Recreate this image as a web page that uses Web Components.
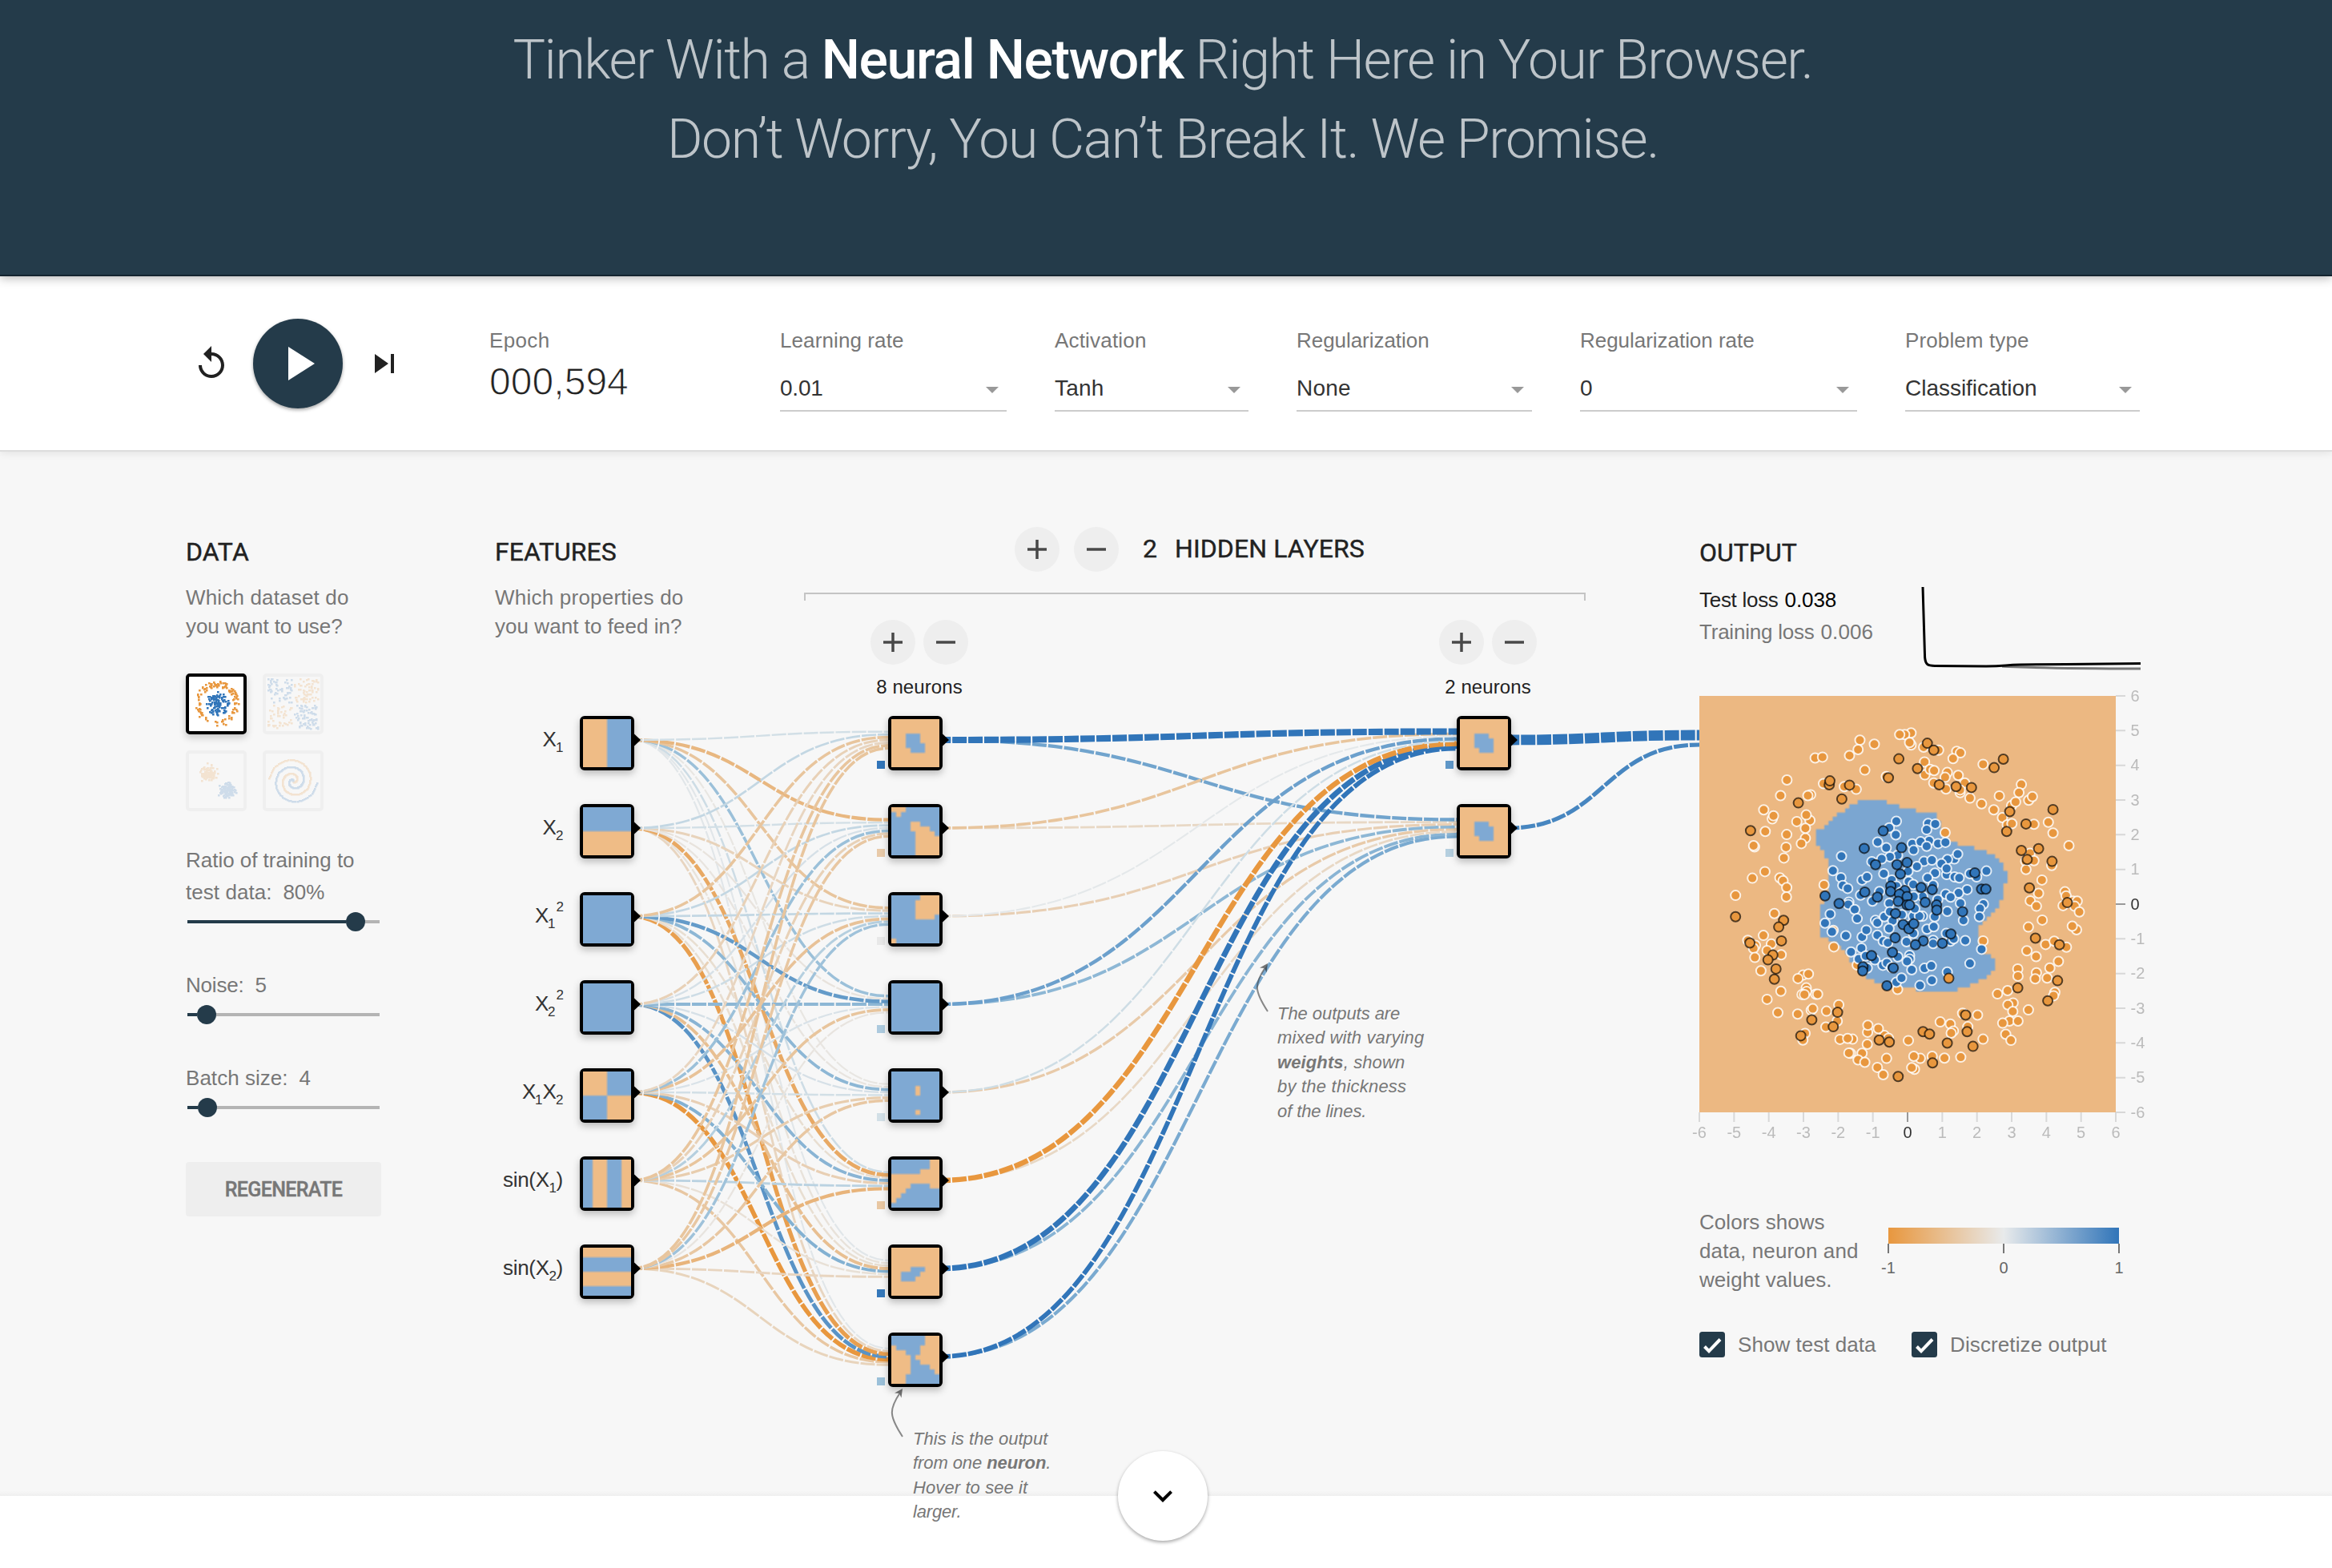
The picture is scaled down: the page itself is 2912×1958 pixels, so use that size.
<!DOCTYPE html>
<html lang="en">
<head>
<meta charset="utf-8">
<title>A Neural Network Playground</title>
<style>
html,body{margin:0;background:#fff}
body{font-family:"Liberation Sans",Arial,sans-serif;color:#777;width:2912px;height:1958px;overflow:hidden}
</style>
</head>
<body>
<nn-app></nn-app>
<script>
const ORANGE=[232,151,62],MID=[232,234,235],BLUE=[49,117,185];
function weightColor(w){
  const t=Math.min(1,Math.abs(w)),e=w<0?ORANGE:BLUE,lift=w<0?[0,0,0]:[0,7,3];
  return 'rgb('+MID.map((m,i)=>Math.round(m+(e[i]-m)*t+lift[i]*Math.sin(Math.PI*t))).join(',')+')';
}
function define(name,html,init){
  customElements.define(name,class extends HTMLElement{
    constructor(){super();this.attachShadow({mode:'open'}).innerHTML=html}
    connectedCallback(){if(init)init.call(this,this.shadowRoot)}
  });
}

/* Single line of text tracked to an exact width. */
define('fit-text','<style>:host{display:block;white-space:pre}</style><span><slot></slot></span>',function(r){
  const w=+this.getAttribute('w');
  if(!w)return;
  const s=r.querySelector('span'),cur=s.getBoundingClientRect().width;
  const fs=parseFloat(getComputedStyle(this).fontSize);
  this.style.letterSpacing=((w+fs*.06-cur)/this.textContent.length).toFixed(3)+'px';
});

define('site-header',`<style>
:host{display:block;box-sizing:border-box;height:345px;padding:26px 8px 0 0;background:#243b4a;border-bottom:2px solid #14242f;
position:relative;z-index:2;box-shadow:0 2px 12px rgba(0,0,0,.3);font:300 68px/99px Roboto,sans-serif;color:#bdc4c9}
div{display:flex;justify-content:center}b{font-weight:500;color:#fff}
</style><div><fit-text w="1619">Tinker With a <b>Neural Network</b> Right Here in Your Browser.</fit-text></div>
<div><fit-text w="1234">Don’t Worry, You Can’t Break It. We Promise.</fit-text></div>`);

define('select-field',`<style>
:host{display:block;font-size:26px;line-height:30px;color:#777}
.v{display:flex;align-items:flex-start;justify-content:space-between;margin-top:28px;height:44px;border-bottom:2px solid #ccc;font-size:28px;line-height:34px;color:#333}
svg{display:block;margin:15px 10px 0 0}
</style><slot name="label"></slot><div class="v"><slot name="value"></slot><svg width="16" height="8"><path d="M0 0h16l-8 8z" fill="#999"/></svg></div>`);

define('control-bar',`<style>
:host{display:flex;box-sizing:border-box;height:217px;padding-left:240px;background:#fff;position:relative;z-index:1;box-shadow:0 2px 0 #ddd,0 2px 12px rgba(0,0,0,.12)}
svg{display:block;fill:#212121}
.play{width:112px;height:112px;margin:53px 28px 0;border-radius:50%;background:#243b4a;box-shadow:0 2px 4px rgba(0,0,0,.35);display:flex;align-items:center;justify-content:center}
.play svg{fill:#fff}
.side{margin-top:85px}
.epoch{margin:65px 0 0 107px;width:363px;font-size:26px;line-height:30px}
.n{font-size:48px;line-height:56px;margin-top:9px;color:#222;-webkit-text-stroke:1px #fff}
select-field{margin-top:65px;margin-right:60px}
</style>
<div class="side"><svg width="48" height="48" viewBox="0 0 24 24"><path d="M12 5V1L7 6l5 5V7c3.31 0 6 2.69 6 6s-2.69 6-6 6-6-2.69-6-6H4c0 4.42 3.58 8 8 8s8-3.58 8-8-3.58-8-8-8z"/></svg></div>
<div class="play"><svg width="72" height="72" viewBox="0 0 24 24"><path d="M8 5v14l11-7z"/></svg></div>
<div class="side"><svg width="48" height="48" viewBox="0 0 24 24"><path d="M6 18l8.5-6L6 6v12zM16 6v12h2V6h-2z"/></svg></div>
<div class="epoch"><fit-text w="74">Epoch</fit-text><div class="n"><fit-text w="171">000,594</fit-text></div></div>
<select-field style="width:283px"><fit-text slot="label" w="153">Learning rate</fit-text><fit-text slot="value" w="52">0.01</fit-text></select-field>
<select-field style="width:242px"><fit-text slot="label" w="113">Activation</fit-text><fit-text slot="value" w="60">Tanh</fit-text></select-field>
<select-field style="width:294px"><fit-text slot="label" w="164">Regularization</fit-text><fit-text slot="value" w="66">None</fit-text></select-field>
<select-field style="width:346px"><fit-text slot="label" w="216">Regularization rate</fit-text><fit-text slot="value">0</fit-text></select-field>
<select-field style="width:293px;margin-right:0"><fit-text slot="label" w="153">Problem type</fit-text><fit-text slot="value" w="163">Classification</fit-text></select-field>`);

define('data-thumb',`<style>:host{display:block;box-sizing:border-box;width:76px;height:76px;border:4px solid #d3d3d3;border-radius:5px;opacity:.2}
:host([active]){border-color:#000;opacity:1;background:#fff;box-shadow:0 4px 10px rgba(0,0,0,.2)}
svg{display:block}</style><svg width="68" height="68"></svg>`,function(r){
  let seed=7;const rnd=()=>(seed=(seed*16807)%2147483647)/2147483647,g=()=>rnd()+rnd()+rnd()+rnd()-2;
  const B=[],O=[],k=this.getAttribute('kind');
  if(k==='circle'){for(let i=0;i<120;i++){const a=rnd()*6.283,q=21+rnd()*7;O.push([35+q*Math.cos(a),34+q*Math.sin(a)]);
    const b=rnd()*6.283,p=rnd()*15;B.push([35+p*Math.cos(b),34+p*Math.sin(b)])}}
  if(k==='xor')for(let i=0;i<250;i++){let x=rnd()*60-30,y=rnd()*60-30;x+=x>0?1.5:-1.5;y+=y>0?1.5:-1.5;(x*y>0?B:O).push([34+x,34+y])}
  if(k==='gauss')for(let i=0;i<130;i++){O.push([24+g()*7,24+g()*7]);B.push([48+g()*7,46+g()*7])}
  if(k==='spiral')for(let i=0;i<130;i++){const q=i/130*30,t=1.75*i/130*6.283;B.push([34+q*Math.sin(t+3.14),34+q*Math.cos(t+3.14)]);O.push([34+q*Math.sin(t),34+q*Math.cos(t)])}
  const d=a=>a.map(p=>'M'+Math.round(p[0]-1)+' '+Math.round(p[1]-1)+'h2.6v2.6h-2.6z').join('');
  r.querySelector('svg').innerHTML='<path fill="#e8973e" d="'+d(O)+'"/><path fill="#3175b9" d="'+d(B)+'"/>';
});

define('range-slider',`<style>:host{display:flex;align-items:center;height:24px;width:240px;margin:5px 0 0 2px}
i{display:block;height:4px;background:#b4b4b4}i.a{background:#243b4a}b{display:block;width:24px;height:24px;border-radius:50%;background:#243b4a}</style>
<i class="a"></i><b></b><i style="flex:1"></i>`,function(r){r.querySelector('.a').style.width=this.getAttribute('at')-12+'px'});

define('data-column',`<style>
:host{display:block;width:244px;padding-top:105px;font-size:26px}
.h{font:400 32px/40px Roboto,sans-serif;color:#222;-webkit-text-stroke:.4px #222}
.d{line-height:36px;margin-top:19px}
.g{display:grid;grid-template-columns:76px 76px;gap:20px;margin:41px 0 41px}
.r{display:flex;line-height:40px}.r fit-text+fit-text{margin-left:14px}
.btn{display:flex;justify-content:center;margin-top:56px;height:68px;border-radius:4px;background:#eee;font:500 25px/70px Roboto,sans-serif;color:#777;-webkit-text-stroke:.4px #777}
</style>
<div class="h"><fit-text w="77">DATA</fit-text></div>
<div class="d"><fit-text w="202">Which dataset do</fit-text><fit-text w="194">you want to use?</fit-text></div>
<div class="g"><data-thumb kind="circle" active></data-thumb><data-thumb kind="xor"></data-thumb><data-thumb kind="gauss"></data-thumb><data-thumb kind="spiral"></data-thumb></div>
<div class="r"><fit-text w="209">Ratio of training to</fit-text></div>
<div class="r"><fit-text w="106">test data:</fit-text><fit-text w="50">80%</fit-text></div><range-slider at="210"></range-slider>
<div class="r" style="margin-top:47px"><fit-text w="71">Noise:</fit-text><fit-text>5</fit-text></div><range-slider at="24"></range-slider>
<div class="r" style="margin-top:47px"><fit-text w="126">Batch size:</fit-text><fit-text>4</fit-text></div><range-slider at="25"></range-slider>
<div class="btn"><fit-text w="145">REGENERATE</fit-text></div>`);

define('round-button',`<style>:host{display:flex;width:56px;height:56px;border-radius:50%;background:#eee;align-items:center;justify-content:center}
.m{display:none}:host([minus]) .p{display:none}svg{display:block}</style>
<svg width="24" height="24" stroke="#484848" stroke-width="3.5"><path d="M0 12h24"/><path class="p" d="M12 0v24"/></svg>`);

/* Neuron: 10x10 decision map, rows given as inclusive ranges of blue cells. */
define('nn-node',`<style>:host{position:absolute;box-sizing:border-box;width:68px;height:68px;border:4px solid #000;border-radius:6px;box-shadow:0 4px 10px rgba(0,0,0,.25);background:#000}
canvas{display:block;width:60px;height:60px}</style><canvas width="20" height="20"></canvas>`,function(r){
  const c=r.querySelector('canvas').getContext('2d');
  c.fillStyle='#efbc86';c.fillRect(0,0,20,20);c.fillStyle='#7fa9d3';
  this.getAttribute('map').split(',').forEach((row,y)=>{row.split(' ').forEach(seg=>{
    if(seg.length<2)return;const a=+seg[0],b=+seg[1];c.fillRect(a*2,y*2,(b-a+1)*2,2)})});
});

const full=Array(10).fill('09').join(',');
const INPUT_MAPS=[Array(10).fill('59').join(','),'09,09,09,09,09,,,,,',full,full,'59,59,59,59,59,04,04,04,04,04',
  Array(10).fill('01 57').join(','),',,09,09,09,,,,09,09'];
const HIDDEN_MAPS=[',,,35,35,36,46,,,','39,00 29,09,03 69,03 89,04 99,04,04,04,04','05,04,04,04,04 99,09,09,09,09,19',full,
  '09,09,09,04 69,04 69,09,09,09,04 69,09','07,07,05,,,47,39,29,19,09',',,,,46,25,24,,,','06,06,15,35,44,45,47,48,39,39'];
const OUT_MAP=',,,35,36,36,46,,,';
const W1=[[.12,.2,-.45,-.3,-.25,-.45,-.45],[-.62,.12,.2,.1,.42,-.3,-.42],[-.45,-.28,.2,.15,-.48,.28,.4],[.42,-.08,.72,.5,.08,-.45,-.07],
  [-.05,-.07,.5,.1,.12,-.35,-.42],[.15,-.78,-.15,.52,-.32,.25,-.65],[.04,-.1,-.15,-.52,.55,-.12,-.25],[.04,-.25,-.9,.78,-1,-.42,-.27]];
const W2=[[1.7,-.45,.02,.68,.14,-1.25,1.35,1.05],[.65,-.22,-.32,.5,-.38,-.22,.52,.6]];
const W3=[3,.88];
const B1=[1,-.38,-.02,.32,.12,-.42,.98,.42],B2=[.75,.28];

define('nn-network',`<style>
:host{display:grid;grid-template-columns:386px 976px;align-content:start;position:relative;width:1504px;height:1304px;font-size:26px}
.map{position:absolute;left:0;top:0;overflow:visible;z-index:0}
.feat{padding-top:105px}.h{font:400 32px/40px Roboto,sans-serif;color:#222;-webkit-text-stroke:.4px #222}.d{line-height:36px;margin-top:19px}
.hid{padding-top:94px}
.top{display:flex;height:56px;padding-left:263px;gap:18px}
.top .h{line-height:54px}.top .c{margin-left:12px;width:22px}
.br{height:8px;margin-top:26px;border:solid #c4c4c4;border-width:2px 2px 0}
.ctl{display:flex;justify-content:space-between;padding:24px 61px 0 83px}
.grp{width:122px}.row{display:flex;gap:10px}
.cap{display:flex;justify-content:center;font-size:24px;line-height:30px;margin-top:13px;color:#222}
.note{position:absolute;font-size:22px;line-height:30.4px;font-style:italic;color:#777}
</style>
<svg class="map" width="1504" height="1304" viewBox="618 564 1504 1304"></svg>
<div class="feat"><div class="h"><fit-text w="150">FEATURES</fit-text></div><div class="d"><fit-text w="234">Which properties do</fit-text><fit-text w="232">you want to feed in?</fit-text></div></div>
<div class="hid"><div class="top"><round-button></round-button><round-button minus></round-button><div class="h c">2</div><div class="h"><fit-text w="235">HIDDEN LAYERS</fit-text></div></div>
<div class="br"></div>
<div class="ctl"><div class="grp"><div class="row"><round-button></round-button><round-button minus></round-button></div><div class="cap"><fit-text w="106">8 neurons</fit-text></div></div>
<div class="grp"><div class="row"><round-button></round-button><round-button minus></round-button></div><div class="cap"><fit-text w="106">2 neurons</fit-text></div></div></div></div>
<div class="note" style="left:977px;top:687px"><fit-text w="152">The outputs are</fit-text><fit-text w="182">mixed with varying</fit-text><fit-text w="158"><b>weights</b>, shown</fit-text><fit-text w="160">by the thickness</fit-text><fit-text w="110">of the lines.</fit-text></div>
<div class="note" style="left:522px;top:1218px"><fit-text w="167">This is the output</fit-text><fit-text w="171">from one <b>neuron</b>.</fit-text><fit-text w="142">Hover to see it</fit-text><fit-text w="59">larger.</fit-text></div>`,function(r){
  const svg=r.querySelector('.map');let s='';
  /* Later links go beneath earlier ones. */
  const link=(x0,y0,x1,y1,w)=>{const m=(x0+x1)/2;
    s=`<path fill="none" stroke="${weightColor(w)}" stroke-width="${(2+3.6*Math.abs(w)).toFixed(2)}" stroke-dasharray="18 2" stroke-dashoffset="4" d="M${x0} ${y0}C${m} ${y0} ${m} ${y1} ${x1} ${y1}"/>`+s};
  const cy=j=>924+110*j,end=(j,i,n)=>cy(j)+(i-(n-1)/2)/n*24;
  W1.forEach((row,j)=>row.forEach((w,i)=>link(788,cy(i),1109,end(j,i,7),w)));
  W2.forEach((row,j)=>row.forEach((w,i)=>link(1173,cy(i),1819,end(j,i,8),w)));
  W3.forEach((w,i)=>link(1883,cy(i),2122,end(0,i,2),w));
  const tri=(x,j)=>{s+=`<path d="M${x} ${cy(j)-8}l8.5 8-8.5 8z"/>`};
  for(let j=0;j<7;j++)tri(791.5,j);for(let j=0;j<8;j++)tri(1176.5,j);for(let j=0;j<2;j++)tri(1886.5,j);
  const bias=(x,j,b)=>{s+=`<rect x="${x}" y="${cy(j)+26}" width="10" height="10" fill="${weightColor(b)}"/>`};
  B1.forEach((b,j)=>bias(1095,j,b));B2.forEach((b,j)=>bias(1805,j,b));
  const T=(x,y,t,fs,len)=>{s+=`<text x="${x}" y="${y}" font-size="${fs||26}" fill="#333"${len?` textLength="${len}"`:''}>${t}</text>`};
  const sub=(x,y,t)=>T(x,y+7.5,t,17);
  let y=931.5;
  T(677.5,y,'X');sub(694,y,'1');y+=110;
  T(677.5,y,'X');sub(694,y,'2');y+=110;
  T(668,y,'X');sub(684,y,'1');T(694.5,y-14,'2',17);y+=110;
  T(668,y,'X');sub(684,y,'2');T(694.5,y-14,'2',17);y+=110;
  T(652,y,'X');sub(668,y,'1');T(677.5,y,'X');sub(694,y,'2');y+=110;
  for(const n of ['1','2']){T(628,y,'sin(X',26,58);sub(685.5,y,n);T(694.5,y,')');y+=110}
  const arrow=(x,y)=>{s+=`<g opacity=".62"><path d="M${x} ${y+60}C${x-17} ${y+34} ${x-17} ${y+26} ${x-3} ${y+5}" fill="none" stroke="#444" stroke-width="2"/><path d="M${x} ${y}L${x-10} ${y+5.5}L${x-4} ${y+6}L${x-1.5} ${y+11.5}z" fill="#222"/></g>`};
  arrow(1583,1203);arrow(1127,1734);
  svg.innerHTML=s;
  const node=(x,j,map)=>{const n=document.createElement('nn-node');n.setAttribute('map',map);n.style.left=x-618+'px';n.style.top=330+110*j+'px';r.appendChild(n)};
  INPUT_MAPS.forEach((m,j)=>node(724,j,m));HIDDEN_MAPS.forEach((m,j)=>node(1109,j,m));[0,1].forEach(j=>node(1819,j,OUT_MAP));
});

/* Sample positions, in plot sketch units (see toX / toY). */
const P={
ot:'581,171 575,202 547,222 628,184 748,147 727,152 711,152 748,187 743,179 435,230 459,227 597,270 343,303 322,355 267,402 667,292 462,315 530,325 569,334 420,352 411,355 789,194 838,204 897,208 909,213 885,232 792,243 983,251 866,278 793,286 810,268 823,272 859,294 902,288 923,313 822,313 862,333 908,345 908,336 940,363 978,382 1018,402 1036,356 1108,318 1100,345 1132,370 1144,358 1076,388 1089,376 1046,428 1062,452 1077,448 1149,450 1196,443 1211,479 1263,521 418,437 406,419 375,441 403,496 403,463 390,514 342,484 340,526 333,562 295,432 299,422 272,474 237,525 234,521 271,607 230,629 320,628 330,637 342,660 341,691 175,686 464,651 859,478 1136,546 1122,573 1149,571 1123,600 1207,587 1175,635 1164,679 1137,704 1157,722 1250,674 1254,688 1276,705 1290,705 1244,720 1282,722 1297,741 1176,768 1131,791 1288,800 1274,788 302,746 266,819 215,835 240,852 234,862 292,847 278,869 238,892 324,883 258,936 396,950 413,947 379,962 323,1004 278,1031 406,993 407,1005 392,1015 400,1015 437,1014 443,1014 313,1075 378,1080 422,1067 427,1062 472,1070 512,1049 507,1103 470,1123 402,1144 395,1166 494,802 496,857 572,917 704,998 516,1164 557,1163 541,1161 606,1140 607,1117 661,1151 641,1128 674,1160 605,1180 588,1210 550,1210 545,1209 575,1232 597,1240 638,1257 657,1281 668,1227 739,1168 778,1227 757,1220 817,1220 857,1226 910,1223 759,1263 750,1258 843,1106 876,1113 886,1136 879,1143 933,1122 916,1077 965,1083 983,1163 1030,1013 1063,1002 1081,1043 1064,1049 1080,1071 1069,1103 1097,1103 1047,1110 1131,1066 1057,1147 1074,1167 983,837 1126,870 1156,889 1187,849 1215,838 1255,858 1229,905 1201,927 1096,930 1097,954 1157,943 1153,963 1192,960 1217,1008 1213,1019',
bt:'700,440 677,462 698,485 804,447 827,449 799,468 639,509 667,528 752,515 756,536 807,505 779,508 799,523 836,514 860,510 521,556 889,565 900,549 867,567 704,553 679,558 652,565 620,574 493,604 519,627 790,573 816,569 767,590 847,581 738,606 864,617 864,597 826,612 802,628 659,614 588,635 604,625 685,635 740,640 755,650 820,652 890,625 905,628 962,625 940,614 994,605 525,653 541,663 931,667 903,678 861,682 877,692 909,712 583,685 645,673 622,705 545,708 543,716 564,733 484,748 572,763 467,778 490,807 535,820 588,824 602,801 632,769 638,777 638,818 661,757 677,712 679,740 688,770 676,796 718,750 755,755 785,755 775,755 825,757 866,739 800,798 822,790 919,769 984,715 973,730 971,757 733,840 657,838 672,843 820,835 820,846 876,838 887,830 863,812 925,836 978,865 940,912 552,874 586,861 577,897 600,887 630,900 656,918 669,910 705,890 743,885 743,897 735,905 750,933 792,928 814,920 866,940 816,968 777,985 700,974 717,960 605,927 684,925 786,690 757,690 755,812 760,730 700,655 715,675 835,700 740,785',
oe:'708,233 801,181 822,204 769,265 674,296 840,319 895,325 945,328 1049,234 1019,262 481,319 483,306 547,320 522,366 380,379 224,471 1070,408 1060,474 1123,449 1211,401 1108,537 1164,531 1127,567 1208,573 1134,661 1258,710 175,757 332,769 316,791 325,837 222,844 297,884 281,900 307,930 302,964 1154,828 1232,850 1226,969 1096,993 1194,1036 871,961 508,1074 424,1099 494,1122 388,1152 644,1166 677,1173 706,1287 787,1138 808,1146 866,1176 926,1083 931,1138 950,1187 818,1242',
be:'657,472 595,530 717,528 632,584 702,584 735,577 713,615 956,611 467,688 513,713 597,675 638,692 682,655 681,673 728,670 710,682 706,706 735,690 735,718 743,718 781,660 817,667 794,709 831,718 832,735 978,665 992,665 916,740 697,746 722,783 741,797 757,780 696,827 788,837 850,845 878,814 762,850 687,875 619,886 591,923 590,937 690,927 669,986'};
const REGION='575,370 665,370 670,378 705,385 715,395 760,400 768,410 830,412 832,430 845,438 848,470 852,485 875,505 900,510 905,518 955,522 962,533 993,537 1000,545 1018,550 1030,562 1045,580 1053,602 1063,606 1063,642 1053,650 1050,700 1038,710 1033,728 1010,755 985,775 968,795 966,850 975,870 1000,880 1012,895 1022,905 1022,932 1010,940 1005,950 990,962 965,972 940,980 938,990 905,993 900,1005 768,1005 760,995 700,990 640,977 605,965 600,955 580,930 560,910 535,880 505,850 480,835 478,827 452,825 450,720 462,710 480,690 478,565 468,560 463,535 437,520 437,468 465,463 480,445 510,412 530,408 548,388 575,380';
const toX=v=>(v-57)*520/1359,toY=v=>(v-24)*520/1382;
const parse=t=>t.split(' ').map(p=>{const q=p.split(',');return[toX(+q[0]),toY(+q[1])]});

define('output-plot',`<style>:host{display:block;position:relative;width:520px;height:520px}
canvas{display:block;width:520px;height:520px}svg{position:absolute;left:0;top:0;overflow:visible}</style>
<canvas width="200" height="200"></canvas><svg width="520" height="520"></svg>`,function(r){
  const c=r.querySelector('canvas').getContext('2d'),poly=parse(REGION);
  c.fillStyle='#ecb882';c.fillRect(0,0,200,200);c.fillStyle='#7ba6d1';
  const inside=(x,y)=>{let k=false;for(let i=0,j=poly.length-1;i<poly.length;j=i++){const a=poly[i],b=poly[j];
    if((a[1]>y)!==(b[1]>y)&&x<(b[0]-a[0])*(y-a[1])/(b[1]-a[1])+a[0])k=!k}return k};
  for(let i=0;i<100;i++)for(let j=0;j<100;j++)if(inside((i+.5)*5.2,(j+.5)*5.2))c.fillRect(i*2,j*2,2,2);
  let s='';
  const dots=(k,fill,st)=>{parse(P[k]).forEach(p=>{s+=`<circle cx="${p[0].toFixed(1)}" cy="${p[1].toFixed(1)}" r="6" fill="${fill}" stroke="${st}" stroke-width="2"/>`})};
  const wh='rgba(255,255,255,.82)',bk='rgba(0,0,0,.65)';
  dots('ot','#e8973e',wh);dots('bt','#3175b9',wh);dots('oe','#e8973e',bk);dots('be','#3175b9',bk);
  for(let v=-6;v<=6;v++){const q=260+v*520/12,z=v===0,col=z?'#999':'#d8d8d8',tc=z?'#333':'#bbb';
    s+=`<path d="M${q} 520v12M520 ${q}h12" stroke="${col}" stroke-width="2"/>
    <text x="${q}" y="552" text-anchor="middle" font-size="20" fill="${tc}">${v}</text><text x="538.5" y="${520-q+6.5}" font-size="20" fill="${tc}">${v}</text>`}
  r.querySelector('svg').innerHTML=s;
});

define('check-field',`<style>:host{display:flex;align-items:center;height:32px;font-size:26px;line-height:32px}
svg{display:block;margin-right:16px}</style><svg width="32" height="32"><rect width="32" height="32" rx="3.5" fill="#243b4a"/><path d="M6.5 18.5l5.5 5.7L26 9.5" fill="none" stroke="#fff" stroke-width="4"/></svg><slot></slot>`);

define('output-column',`<style>
:host{display:block;width:550px;padding-top:106px;position:relative;z-index:1;font-size:26px}
.h{font:400 32px/40px Roboto,sans-serif;color:#222;-webkit-text-stroke:.4px #222}
.loss{display:flex;height:140px;margin-top:19px;line-height:40px}
.loss>div{width:278px}.r{display:flex;gap:8px}
svg{display:block;overflow:visible}
.leg{display:flex;margin-top:119px;line-height:36px;height:108px}.leg>div{width:236px}
.chk{display:flex;margin-top:47px}
</style>
<div class="h"><fit-text w="120">OUTPUT</fit-text></div>
<div class="loss"><div><div class="r" style="color:#222"><fit-text w="97">Test loss</fit-text><fit-text w="63" style="color:#000">0.038</fit-text></div><div class="r"><fit-text w="142">Training loss</fit-text><fit-text w="64">0.006</fit-text></div></div>
<svg width="272" height="110" fill="none" stroke-width="3"><path stroke="#777" d="M100 103C125 104 150 105.800 273 106"/><path stroke="#000" d="M1 4L3.600 92C4.500 101 7 102.300 16 102.500L80 103C104 103 104 101 122 101L180 100.500L273 99.500"/></svg></div>
<output-plot></output-plot>
<div class="leg"><div><fit-text w="155">Colors shows</fit-text><fit-text w="197">data, neuron and</fit-text><fit-text w="164">weight values.</fit-text></div>
<svg width="290" height="90"><defs><linearGradient id="g"><stop offset="0" stop-color="#e8973e"/><stop offset=".5" stop-color="#e8eaeb"/><stop offset="1" stop-color="#3175b9"/></linearGradient></defs>
<rect y="25" width="288" height="20" fill="url(#g)"/><path d="M0 45v12M144 45v12M288 45v12" stroke="#777" stroke-width="2"/>
<g font-size="20" fill="#666" text-anchor="middle"><text x="0" y="82">-1</text><text x="144" y="82">0</text><text x="288" y="82">1</text></g></svg></div>
<div class="chk"><check-field style="width:265px"><fit-text w="171">Show test data</fit-text></check-field><check-field><fit-text w="194">Discretize output</fit-text></check-field></div>`);

define('nn-app',`<style>
:host{display:block}
main{display:flex;height:1304px;margin-top:2px;padding-left:232px;position:relative;background:linear-gradient(#f7f7f7 99.5%,#efefef)}
nn-network{margin-left:142px}
footer{height:90px;background:#fff;display:flex;justify-content:center;padding-right:8px}
.more{position:relative;top:-56px;width:112px;height:112px;flex:none;border-radius:50%;background:#fff;box-shadow:0 2px 4px rgba(0,0,0,.35);display:flex;align-items:center;justify-content:center;z-index:3}
main{z-index:0}
</style><site-header></site-header><control-bar></control-bar>
<main><data-column></data-column><nn-network></nn-network><output-column></output-column></main>
<footer><div class="more"><svg width="48" height="48" viewBox="0 0 24 24"><path d="M16.590 8.590L12 13.170 7.410 8.590 6 10l6 6 6-6z"/></svg></div></footer>`);
</script>
</body>
</html>
